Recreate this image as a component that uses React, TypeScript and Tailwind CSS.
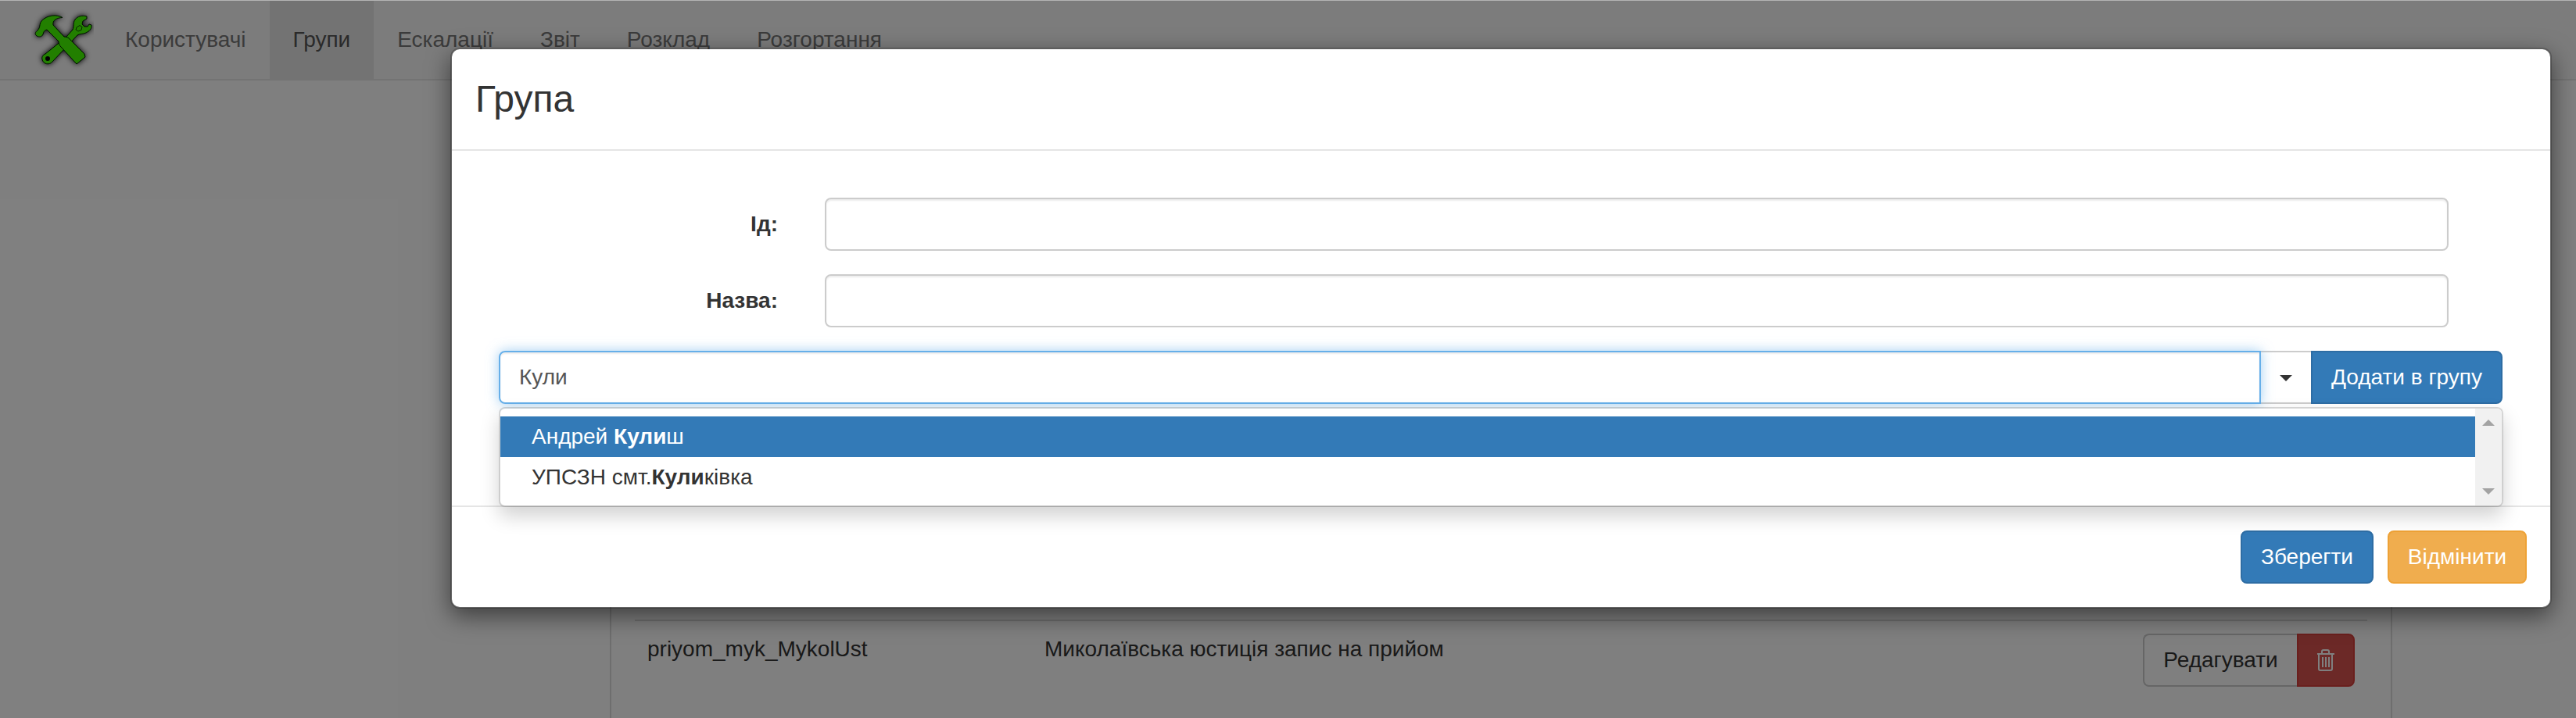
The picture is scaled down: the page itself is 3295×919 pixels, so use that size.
const nav = ["Користувачі", "Групи", "Ескалації", "Звіт", "Розклад", "Розгортання"];

function Logo() {
  return (
    <svg width="80" height="80" viewBox="0 0 80 80" className="overflow-hidden">
      <defs>
        <filter id="glow" x="-20%" y="-20%" width="140%" height="140%">
          <feDropShadow dx="0" dy="0" stdDeviation="3.5" floodColor="#000" floodOpacity="1" />
        </filter>
      </defs>
      <g filter="url(#glow)">
        <g fill="#4f0" stroke="#001c00" strokeWidth="1">
          <path d="M44 38L53 28C55 24 53 19 56 15C59 11 65 9 71 11L71 14L66 17L65 21L68 24L72 24L74 21L77 22C78 27 74 30 70 32C66 34 62 33 59 35L27 69C23 74 15 72 14 66C13 63 15 60 18 59Z" />
          <path d="M40 12.500C33 8 20 9 13 17C10 21 12 25 8 29C5 31 4 34 7 36C10 38 14 37 15 34C16 31 16 29 20 28L35 43C35 46 36 48 38 50L58 72L69 63L68 59L50 41C48 38 45 37 42 37L28 22C27 16 32 13 40 12.500Z" />
        </g>
      </g>
      <circle cx="21" cy="65" r="3" fill="#000" />
      <path d="M58 25l4-2.500 3 2-1 4-4 1.500-3-2z" fill="none" stroke="#0c5000" strokeWidth="1" />
    </svg>
  );
}

function TrashIcon() {
  return (
    <svg width="24" height="28" viewBox="0 0 24 28" fill="none" stroke="#fff" strokeWidth="2">
      <path d="M1 6h22M7 5V3q0-2 2-2h5q2 0 2 2v2M3 6v19q0 2 2 2h13q2 0 2-2V6" />
      <path d="M8 10v13M12 10v13M16 10v13" />
    </svg>
  );
}

function Field({ label }: { label: string }) {
  return (
    <div className="flex h-[68px] items-center">
      <label className="w-[357px] shrink-0 text-right font-bold">{label}</label>
      <input className="ml-[60px] h-[68px] w-[2077px] rounded-[8px] border-2 border-[#ccc] px-6 shadow-[inset_0_2px_2px_rgba(0,0,0,0.075)] outline-none" />
    </div>
  );
}

export default function App() {
  return (
    <div className="relative h-[919px] w-[3295px] overflow-hidden bg-white font-['Liberation_Sans',Arial,sans-serif] text-[28px] leading-[40px] text-[#333]">
      <div className="flex h-full flex-col pt-px">
        <nav className="flex h-[102px] shrink-0 border-b-2 border-[#e7e7e7] bg-[#f8f8f8] pl-[40px]">
          <div className="w-[90px] pt-[9px]">
            <Logo />
          </div>
          {nav.map((item) => (
            <a
              key={item}
              className={
                item === "Групи"
                  ? "flex h-[102px] items-center bg-[#e7e7e7] px-[30px] pb-[2px] text-[#555]"
                  : "flex h-[102px] items-center px-[30px] pb-[2px] text-[#777]"
              }
            >
              {item}
            </a>
          ))}
        </nav>
        <main className="ml-[780px] flex w-[2280px] grow flex-col justify-end border-x-2 border-[#ddd] pl-[30px] pr-[30px]">
          <div className="flex h-[126px] items-start border-t-2 border-[#ddd] pt-4">
            <div className="w-[508px] pl-4">priyom_myk_MykolUst</div>
            <div className="grow pl-4">Миколаївська юстиція запис на прийом</div>
            <div className="mr-4 flex h-[68px]">
              <button className="w-[197px] rounded-l-[8px] border-2 border-r-0 border-[#ccc] bg-white">Редагувати</button>
              <button className="flex w-[74px] items-center justify-center rounded-r-[8px] border-2 border-[#d43f3a] bg-[#d9534f]">
                <TrashIcon />
              </button>
            </div>
          </div>
        </main>
      </div>

      <div className="absolute inset-x-0 top-px bottom-0 bg-black/50" />
      <div className="absolute inset-x-0 top-0 h-px bg-[#b4b4b4]" />

      <section className="absolute top-[61px] left-[576px] flex h-[718px] w-[2688px] flex-col rounded-[12px] border-2 border-black/20 bg-white bg-clip-padding shadow-[0_10px_30px_rgba(0,0,0,0.5)]">
        <header className="h-[130px] border-b-2 border-[#e5e5e5] px-[30px] pt-[30px]">
          <h3 className="text-[48px] leading-[68px]">Група</h3>
        </header>
        <div className="flex h-[454px] flex-col gap-[30px] px-[60px] pt-[60px]">
          <Field label="Ід:" />
          <Field label="Назва:" />
          <div className="relative flex h-[68px] w-[2563px]">
            <input
              defaultValue="Кули"
              className="relative h-[68px] w-[2254px] rounded-l-[8px] border-2 border-[#66afe9] px-6 text-[#555] shadow-[inset_0_2px_2px_rgba(0,0,0,0.075),0_0_16px_rgba(102,175,233,0.6)] outline-none"
            />
            <button className="flex w-[64px] items-center justify-center border-y-2 border-[#ccc]">
              <span className="mt-[2px] border-x-[8px] border-t-[8px] border-x-transparent border-t-[#333]" />
            </button>
            <button className="w-[245px] rounded-r-[8px] border-2 border-[#2e6da4] bg-[#337ab7] text-white">Додати в групу</button>
            <div className="absolute top-[72px] left-0 flex h-[128px] w-[2564px] overflow-hidden rounded-[8px] border-2 border-black/15 bg-white bg-clip-padding shadow-[0_12px_24px_rgba(0,0,0,0.175)]">
              <ul className="grow py-[10px]">
                <li className="h-[52px] bg-[#337ab7] px-[40px] py-[6px] text-white">
                  Андрей <b>Кули</b>ш
                </li>
                <li className="h-[52px] px-[40px] py-[6px]">
                  УПСЗН смт.<b>Кули</b>ківка
                </li>
              </ul>
              <div className="flex w-[34px] flex-col items-center justify-between bg-[#f1f1f1] py-[14px]">
                <span className="border-x-[8px] border-b-[8px] border-x-transparent border-b-[#a3a3a3]" />
                <span className="border-x-[8px] border-t-[8px] border-x-transparent border-t-[#a3a3a3]" />
              </div>
            </div>
          </div>
        </div>
        <footer className="flex h-[130px] justify-end gap-[18px] border-t-2 border-[#e5e5e5] px-[30px] pt-[30px]">
          <button className="h-[68px] w-[170px] rounded-[8px] border-2 border-[#2e6da4] bg-[#337ab7] text-white">Зберегти</button>
          <button className="h-[68px] w-[178px] rounded-[8px] border-2 border-[#eea236] bg-[#f0ad4e] text-white">Відмінити</button>
        </footer>
      </section>
    </div>
  );
}
